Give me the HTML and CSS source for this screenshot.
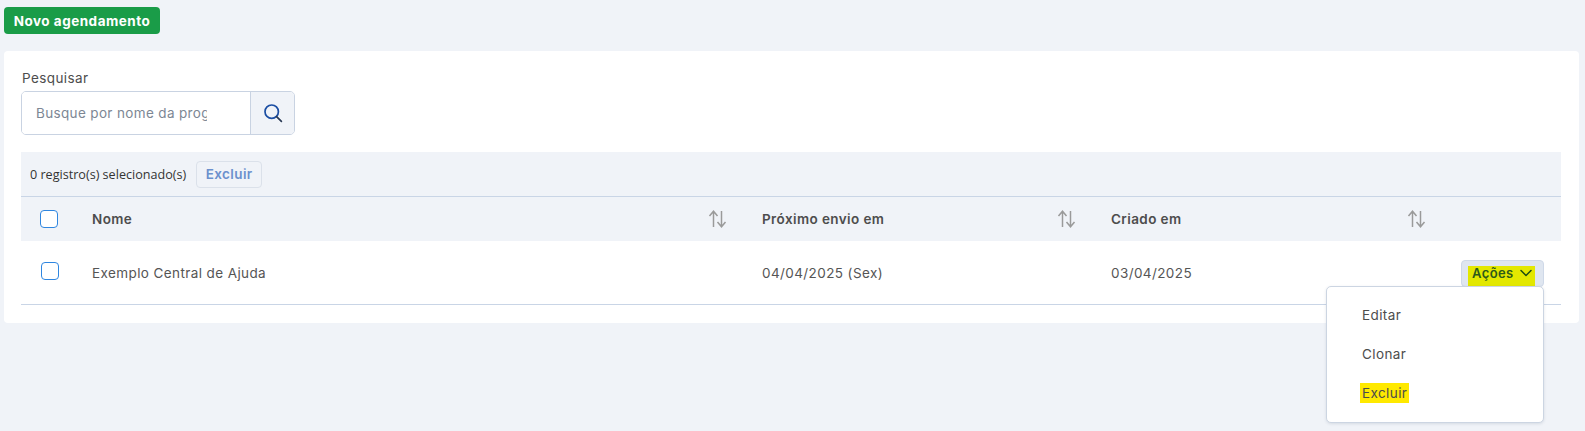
FILE: index.html
```html
<!DOCTYPE html>
<html lang="pt-br">
<head>
  <meta charset="utf-8">
  <title>Agendamentos</title>
  <link rel="stylesheet" href="styles.css">
</head>
<body>
  <button class="btn-new">Novo agendamento</button>
  <div class="card">
    <label class="search-label" for="search">Pesquisar</label>
    <div class="search">
      <div class="search-field">
        <input id="search" class="search-input" type="text" placeholder="Busque por nome da programação">
      </div>
      <button class="search-btn" aria-label="Pesquisar">
        <svg width="20" height="20" viewBox="0 0 20 20" fill="none" stroke="#1b4ea3" stroke-width="1.7" stroke-linecap="round"><circle cx="8.7" cy="8.7" r="6.7"/><path d="M13.6 13.6 18.4 18.4" stroke="#2a3a55"/></svg>
      </button>
    </div>

    <div class="bulk">
      <span class="bulk-count">0 registro(s) selecionado(s)</span>
      <button class="bulk-btn">Excluir</button>
    </div>

    <div class="grid head">
      <div class="cell-check"><span class="check"></span></div>
      <div class="cell">Nome
        <svg class="sort" width="20" height="18" viewBox="0 0 20 18" fill="none" stroke="#9a9a9a" stroke-width="1.5"><path d="M5.5 17V1.5M1.500 6l4-4.800 4 4.800"/><path d="M13.500 1v15.500M9.500 12l4 4.800 4-4.800"/></svg>
      </div>
      <div class="cell">Próximo envio em
        <svg class="sort" width="20" height="18" viewBox="0 0 20 18" fill="none" stroke="#9a9a9a" stroke-width="1.5"><path d="M5.5 17V1.5M1.500 6l4-4.800 4 4.800"/><path d="M13.500 1v15.500M9.500 12l4 4.800 4-4.800"/></svg>
      </div>
      <div class="cell">Criado em
        <svg class="sort" width="20" height="18" viewBox="0 0 20 18" fill="none" stroke="#9a9a9a" stroke-width="1.5"><path d="M5.5 17V1.5M1.500 6l4-4.800 4 4.800"/><path d="M13.500 1v15.500M9.500 12l4 4.800 4-4.800"/></svg>
      </div>
      <div></div>
    </div>

    <div class="grid row">
      <div class="cell-check"><span class="check check-row"></span></div>
      <div class="cell">Exemplo Central de Ajuda</div>
      <div class="cell">04/04/2025 (Sex)</div>
      <div class="cell">03/04/2025</div>
      <div class="actions">
        <button class="actions-btn">
          <span class="mark-actions">Ações
            <svg width="12" height="8" viewBox="0 0 12 8" fill="none" stroke="#1d4a12" stroke-width="1.5" stroke-linecap="round" stroke-linejoin="round"><path d="M1 1.500 6 6.500l5-5"/></svg>
          </span>
        </button>
        <ul class="menu">
          <li class="menu-item">Editar</li>
          <li class="menu-item">Clonar</li>
          <li class="menu-item"><span class="mark-item">Excluir</span></li>
        </ul>
      </div>
    </div>
  </div>
</body>
</html>
```

FILE: styles.css
```css
* {
  box-sizing: border-box;
}
html {
  height: 100%;
}
body {
  min-height: 100%;
  margin: 0;
  padding: 7px 6px 0 4px;
  background: #f0f3f8;
  font-family: Inter, "Open Sans", sans-serif;
  font-size: 13.5px;
  color: #4d4d4d;
  letter-spacing: 0.4px;
}
button {
  font-family: inherit;
  letter-spacing: inherit;
}
.btn-new {
  display: block;
  width: 156px;
  height: 27px;
  padding: 0;
  border: none;
  border-radius: 4px;
  background: #1a9c48;
  color: #fff;
  font-size: 13.5px;
  font-weight: 700;
  letter-spacing: 0.5px;
}
.card {
  margin-top: 17px;
  height: 272px;
  padding: 18px 18px 0 17px;
  background: #fff;
  border-radius: 4px;
}
.search-label {
  display: block;
  height: 22px;
  line-height: 18px;
  padding-left: 1px;
  font-size: 13.5px;
}
.search {
  display: flex;
  width: 274px;
  height: 44px;
  border: 1px solid #c9d3e2;
  border-radius: 5px;
  overflow: hidden;
}
.search-field {
  width: 229px;
  padding: 0 43px 0 14px;
  border-right: 1px solid #c9d3e2;
  background: #fff;
}
.search-input {
  width: 100%;
  height: 100%;
  padding: 0;
  border: none;
  outline: none;
  font-family: inherit;
  font-size: 13.5px;
  letter-spacing: 0.35px;
}
.search-input::placeholder {
  color: #7d8794;
  opacity: 1;
}
.search-btn {
  flex: 1;
  display: flex;
  align-items: center;
  justify-content: center;
  padding: 0;
  border: none;
  background: #f0f3f8;
}
.bulk {
  display: flex;
  align-items: center;
  gap: 10px;
  height: 45px;
  margin-top: 17px;
  padding-left: 9px;
  background: #f0f3f8;
  border-bottom: 1px solid #c9d5e6;
}
.bulk-count {
  font-family: "Open Sans", sans-serif;
  font-size: 12.6px;
  letter-spacing: 0;
  color: #333;
}
.bulk-btn {
  width: 66px;
  height: 27px;
  padding: 0;
  border: 1px solid #dbe1ea;
  border-radius: 4px;
  background: #f0f3f8;
  color: #6b90cd;
  font-size: 13.5px;
  font-weight: 600;
}
.grid {
  display: grid;
  grid-template-columns: 71px 670px 349px 350px 100px;
  align-items: center;
}
.head {
  height: 44px;
  background: #f0f3f8;
  font-weight: 600;
}
.row {
  height: 64px;
  border-bottom: 1px solid #c9d5e6;
  color: #555;
}
.cell-check {
  padding-left: 19px;
}
.check {
  display: block;
  width: 18px;
  height: 18px;
  border: 1px solid #2f86e0;
  border-radius: 4px;
  background: #fff;
}
.check-row {
  margin-left: 1px;
  margin-top: -3px;
}
.cell {
  display: flex;
  align-items: center;
  justify-content: space-between;
  padding-right: 34px;
}
.actions {
  position: relative;
  margin-top: 1px;
}
.actions-btn {
  display: block;
  width: 83px;
  height: 27px;
  padding: 5px 8px 0 6px;
  border: 1px solid #cfd9e8;
  border-radius: 4px;
  background: #dfe6f0;
}
.mark-actions {
  display: flex;
  align-items: center;
  justify-content: space-between;
  height: 21px;
  padding: 0 3px 6px 4px;
  background: #e3e800;
  color: #2c5a1a;
  font-size: 13px;
  font-weight: 600;
}
.menu {
  position: absolute;
  top: 26px;
  right: 17px;
  width: 218px;
  height: 137px;
  margin: 0;
  padding: 9px 0 0 35px;
  list-style: none;
  background: #fff;
  border: 1px solid #ccd5e2;
  border-radius: 5px;
  box-shadow: 0 1px 3px rgba(60, 80, 110, 0.15);
}
.menu-item {
  height: 39px;
  line-height: 39px;
  color: #4d4d4d;
}
.mark-item {
  display: inline-block;
  height: 20px;
  line-height: 20px;
  margin-left: -2px;
  padding: 0 2px;
  background: #ffe900;
}
```
